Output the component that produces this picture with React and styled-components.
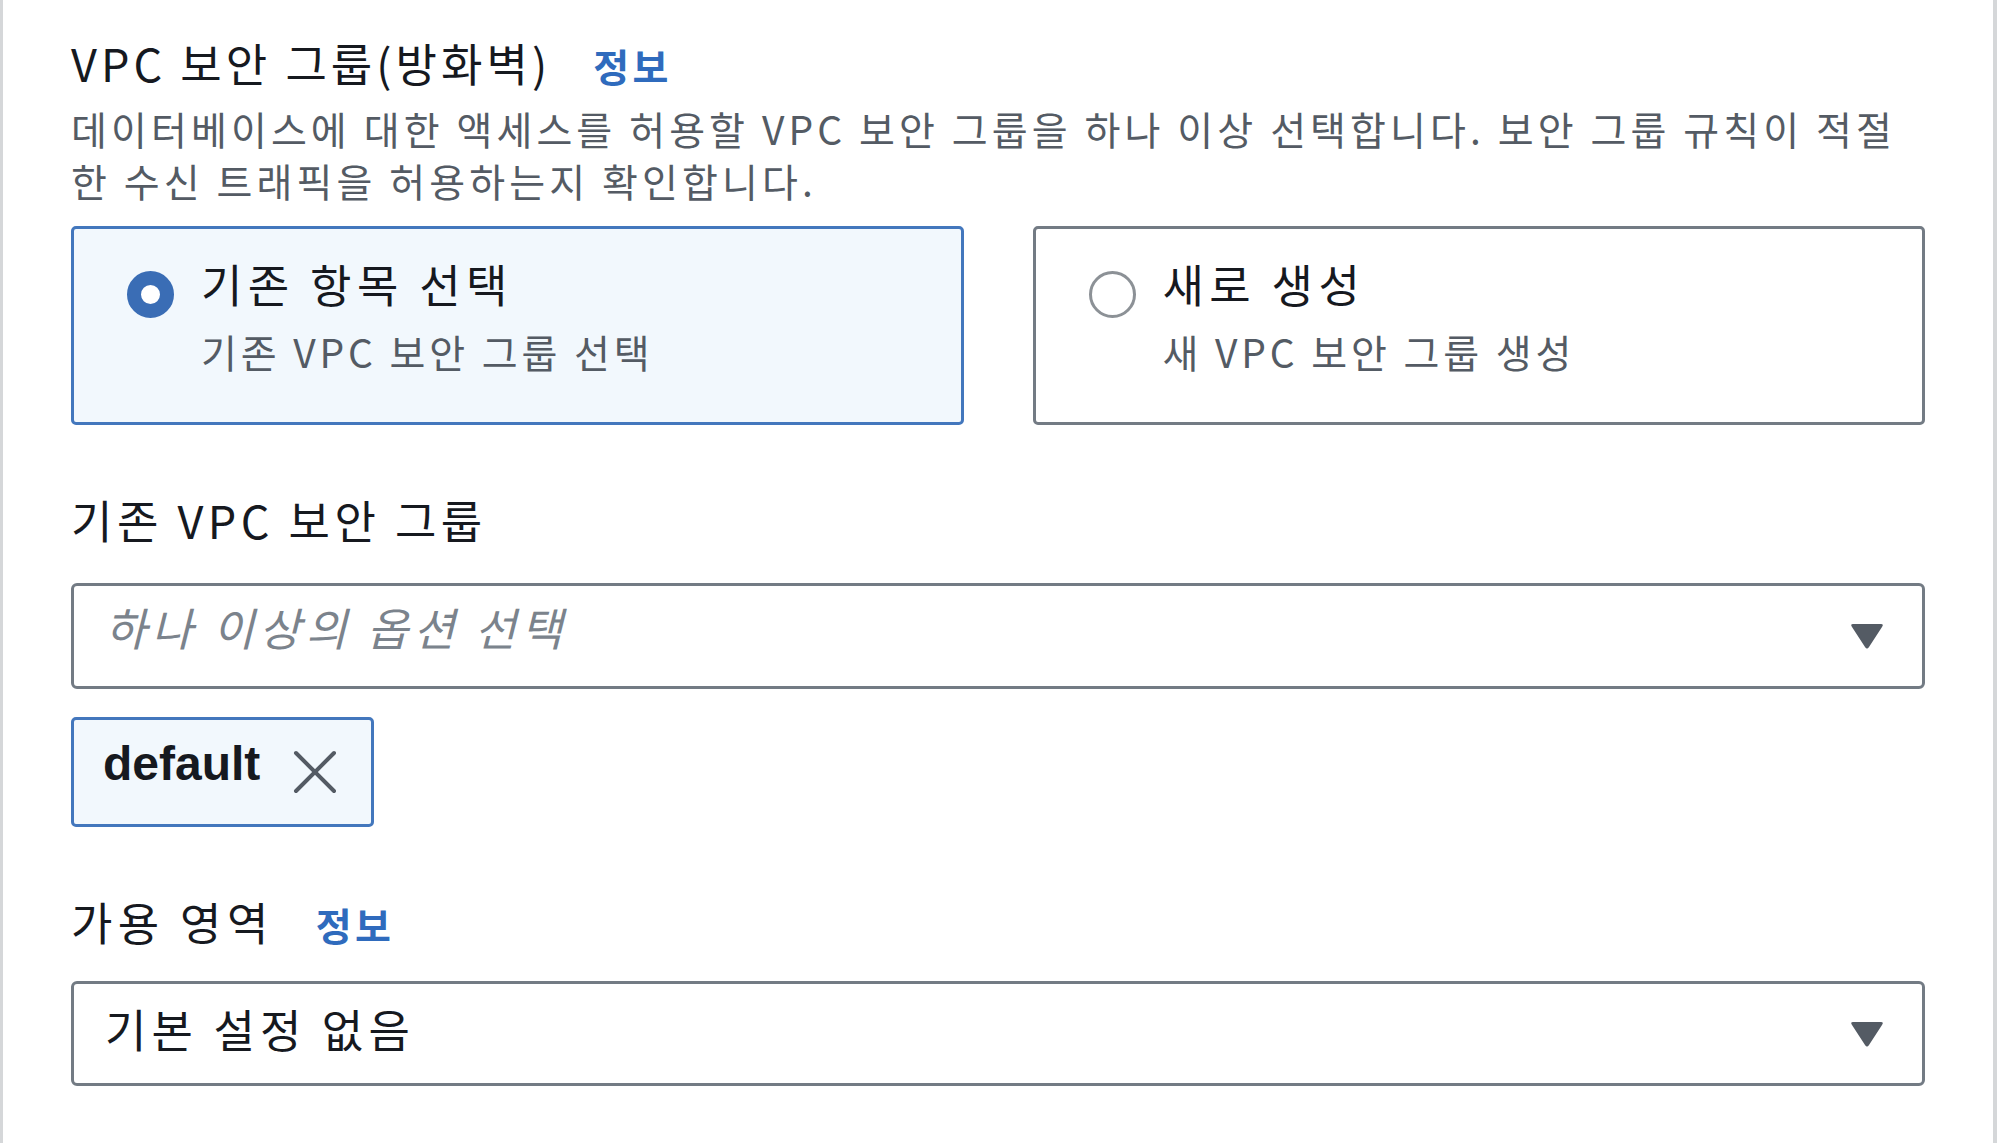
import React, { useState } from "react"
import styled, { createGlobalStyle } from "styled-components"

const GlobalStyle = createGlobalStyle`
    html, body {
        margin: 0;
        padding: 0;
        background: #ffffff;
    }
    body {
        font-family: "Noto Sans CJK KR", "Noto Sans", sans-serif;
        color: #16191f;
    }
`

const tiles = [
    { id: "existing", title: "기존 항목 선택", sub: "기존 VPC 보안 그룹 선택" },
    { id: "new", title: "새로 생성", sub: "새 VPC 보안 그룹 생성" },
]

const App = () => {
    const [choice, setChoice] = useState("existing")
    const [tokens, setTokens] = useState(["default"])

    return (
        <>
            <GlobalStyle />
            <Panel>
                <LabelRow>
                    <Label $spacing="0.09em">VPC 보안 그룹(방화벽)</Label>
                    <Info>정보</Info>
                </LabelRow>
                <Description>
                    데이터베이스에 대한 액세스를 허용할 VPC 보안 그룹을 하나 이상 선택합니다. 보안 그룹 규칙이 적절
                    <br />
                    한 수신 트래픽을 허용하는지 확인합니다.
                </Description>

                <Tiles>
                    {tiles.map(t => (
                        <Tile
                            key={t.id}
                            $selected={choice === t.id}
                            onClick={() => setChoice(t.id)}
                        >
                            <Radio $checked={choice === t.id} />
                            <TileText>
                                <TileTitle>{t.title}</TileTitle>
                                <TileSub>{t.sub}</TileSub>
                            </TileText>
                        </Tile>
                    ))}
                </Tiles>

                <LabelRow $gap>
                    <Label $spacing="0.1em">기존 VPC 보안 그룹</Label>
                </LabelRow>
                <Select>
                    <Placeholder>하나 이상의 옵션 선택</Placeholder>
                    <Caret />
                </Select>
                <TokenList>
                    {tokens.map(name => (
                        <Token key={name}>
                            <TokenName>{name}</TokenName>
                            <Dismiss
                                type="button"
                                onClick={() =>
                                    setTokens(tokens.filter(n => n !== name))
                                }
                            >
                                <svg width="48" height="46" viewBox="0 0 48 46">
                                    <path
                                        d="M5 4 L43 42 M43 4 L5 42"
                                        stroke="#545b64"
                                        strokeWidth="4"
                                        strokeLinecap="round"
                                        fill="none"
                                    />
                                </svg>
                            </Dismiss>
                        </Token>
                    ))}
                </TokenList>

                <LabelRow $gap>
                    <Label $spacing="0.12em">가용 영역</Label>
                    <Info>정보</Info>
                </LabelRow>
                <Select $short>
                    <Value>기본 설정 없음</Value>
                    <Caret />
                </Select>
            </Panel>
        </>
    )
}

const Caret = () => (
    <CaretBox>
        <svg width="36" height="30" viewBox="0 0 36 30">
            <path
                d="M4 3 L32 3 Q35 3 33 6 L20 26 Q18 29 16 26 L3 6 Q1 3 4 3 Z"
                fill="#545b64"
            />
        </svg>
    </CaretBox>
)

export default App

const Panel = styled.div`
    box-sizing: border-box;
    width: 1997px;
    min-height: 100vh;
    padding: 33px 68px 40px 68px;
    border-left: 3px solid #d5d7d9;
    border-right: 4px solid #d5d7d9;
`

const LabelRow = styled.div`
    display: flex;
    align-items: baseline;
    gap: 42px;
    height: 60px;
    margin-top: ${p => (p.$gap ? "65px" : "0")};
`

const Label = styled.span`
    font-size: 45px;
    line-height: 60px;
    letter-spacing: ${p => p.$spacing || "0.1em"};
    color: #16191f;
    white-space: nowrap;
`

const Info = styled.span`
    font-size: 39px;
    font-weight: 700;
    color: #2f6bbd;
    letter-spacing: 0.09em;
`

const Description = styled.div`
    margin-top: 9px;
    font-size: 39px;
    line-height: 52px;
    letter-spacing: 0.105em;
    color: #545b64;
    white-space: nowrap;
`

const Tiles = styled.div`
    display: grid;
    grid-template-columns: 1fr 1fr;
    gap: 69px;
    margin-top: 20px;
`

const Tile = styled.div`
    box-sizing: border-box;
    height: 199px;
    display: flex;
    align-items: flex-start;
    gap: 27px;
    padding: 25px 52px 0 53px;
    border: 3px solid ${p => (p.$selected ? "#4377bd" : "#737b84")};
    border-radius: 5px;
    background: ${p => (p.$selected ? "#f2f8fd" : "#ffffff")};
    cursor: pointer;
`

const Radio = styled.span`
    box-sizing: border-box;
    flex: none;
    width: 47px;
    height: 47px;
    margin-top: 17px;
    border-radius: 50%;
    background: #ffffff;
    border: ${p => (p.$checked ? "14px solid #3a6db5" : "3px solid #8c9196")};
`

const TileText = styled.div`
    display: flex;
    flex-direction: column;
`

const TileTitle = styled.div`
    font-size: 45px;
    line-height: 60px;
    letter-spacing: 0.12em;
    color: #16191f;
`

const TileSub = styled.div`
    margin-top: 11px;
    font-size: 39px;
    line-height: 52px;
    letter-spacing: 0.1em;
    color: #545b64;
`

const Select = styled.div`
    box-sizing: border-box;
    height: ${p => (p.$short ? "105px" : "106px")};
    margin-top: ${p => (p.$short ? "29px" : "33px")};
    display: flex;
    align-items: center;
    justify-content: space-between;
    padding: 0 37px 0 31px;
    border: 3px solid #737b84;
    border-radius: 6px;
    background: #ffffff;
`

const Placeholder = styled.span`
    font-size: 45px;
    font-style: italic;
    letter-spacing: 0.11em;
    color: #7b838c;
    margin-top: -20px;
`

const Value = styled.span`
    font-size: 45px;
    letter-spacing: 0.115em;
    color: #16191f;
    margin-top: -11px;
`

const CaretBox = styled.span`
    display: flex;
    width: 36px;
    height: 30px;
`

const TokenList = styled.div`
    display: flex;
    flex-wrap: wrap;
    gap: 20px;
    margin-top: 28px;
`

const Token = styled.div`
    box-sizing: border-box;
    height: 110px;
    display: flex;
    align-items: center;
    gap: 31px;
    padding: 0 32px 0 29px;
    border: 3px solid #4377bd;
    border-radius: 5px;
    background: #f2f8fd;
`

const TokenName = styled.span`
    font-family: "Liberation Sans", Arial, sans-serif;
    font-size: 48px;
    font-weight: 700;
    color: #16191f;
    margin-top: -18px;
`

const Dismiss = styled.button`
    display: flex;
    padding: 0;
    border: none;
    background: none;
    cursor: pointer;
`
